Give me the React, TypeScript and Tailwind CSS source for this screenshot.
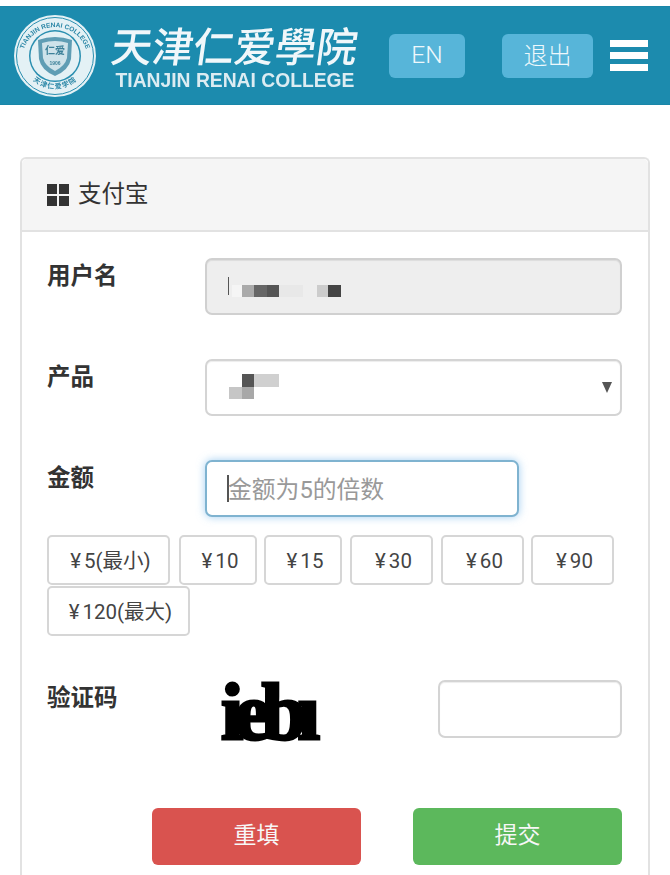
import React from 'react';

const cjk = 'font-["Roboto","Noto_Sans_CJK_SC",sans-serif]';

const amounts = [
    { value: '5(最小)', cls: 'w-[123px] mr-[9px]' },
    { value: '10', cls: 'w-[78px] mr-[7px]' },
    { value: '15', cls: 'w-[78px] mr-[8px]' },
    { value: '30', cls: 'w-[83px] mr-[8px]' },
    { value: '60', cls: 'w-[83px] mr-[7px]' },
    { value: '90', cls: 'w-[83px]' },
    { value: '120(最大)', cls: 'w-[143px]' },
];

const Seal: React.FC = () => (
    <svg width="84" height="84" viewBox="0 0 84 84" className="shrink-0">
        <circle cx="42" cy="42" r="41" fill="#e4f1f5" />
        <circle cx="42" cy="42" r="38.5" fill="none" stroke="#2a8fb0" strokeWidth="1" />
        <circle cx="42" cy="42" r="26" fill="#2a8fb0" />
        <circle cx="42" cy="42" r="24.5" fill="#e4f1f5" />
        <path d="M25 26 Q42 20 59 26 L58 45 Q56 56 42 62 Q28 56 26 45 Z" fill="#5f9db4" />
        <path d="M29 29 Q42 25 55 29 L54 44 Q52 52 42 57 Q32 52 30 44 Z" fill="#cfe3ea" />
        <defs>
            <path id="sealTop" d="M9 46 A33 33 0 0 1 75 46" />
            <path id="sealBottom" d="M13 58 A33.5 33.5 0 0 0 71 58" />
        </defs>
        <text fontSize="6.6" fontWeight="700" fill="#2a86a6" fontFamily="Liberation Sans">
            <textPath href="#sealTop" startOffset="50%" textAnchor="middle">TIANJIN RENAI COLLEGE</textPath>
        </text>
        <text fontSize="7" fontWeight="700" fill="#2a86a6" fontFamily="Noto Sans CJK SC" letterSpacing="1">
            <textPath href="#sealBottom" startOffset="50%" textAnchor="middle">天津仁爱学院</textPath>
        </text>
        <text x="42" y="40" textAnchor="middle" fontSize="10" fontWeight="700" fill="#3d8199" fontFamily="Noto Sans CJK SC">仁爱</text>
        <text x="42" y="51" textAnchor="middle" fontSize="5" fontWeight="700" fill="#3d8199" fontFamily="Liberation Sans">1906</text>
    </svg>
);

const Pixel: React.FC<{ w: number; color: string }> = ({ w, color }) => (
    <span className={color} style={{ width: w, height: '100%' }} />
);

export default function App() {
    return (
        <div className={`w-[670px] h-[875px] overflow-hidden bg-white text-[#333] ${cjk}`}>
            {/* Header */}
            <header className="mt-[6px] h-[99px] bg-[#1c8bae] flex items-center pl-[13px] border-y border-[#1a86a8]">
                <div className="flex items-center blur-[0.4px]">
                    <Seal />
                    <div className="ml-[14px] w-[248px] flex flex-col items-center text-[#f0f7fa]">
                        <div className='h-[50px] leading-[50px] text-[41px] font-["Noto_Sans_CJK_SC",sans-serif] font-medium whitespace-nowrap -skew-x-[8deg]'>
                            天津仁爱學院
                        </div>
                        <div className='mt-[1px] text-[19.3px] leading-[22px] font-bold font-["Liberation_Sans",sans-serif] whitespace-nowrap text-[#dcecf2]'>
                            TIANJIN RENAI COLLEGE
                        </div>
                    </div>
                </div>
                <button className="ml-[30px] w-[76px] h-[44px] rounded-[6px] bg-[#57b5d9] text-[#eef8fc] text-[24.5px] font-light">EN</button>
                <button className="ml-[37px] w-[91px] h-[44px] rounded-[6px] bg-[#57b5d9] text-[#eef8fc] text-[24px] font-light">退出</button>
                <div className="ml-[17px] w-[38px] flex flex-col gap-[5px]">
                    <span className="h-[7px] bg-white" />
                    <span className="h-[7px] bg-white" />
                    <span className="h-[7px] bg-white" />
                </div>
            </header>

            {/* Panel */}
            <main className="mt-[52px] mx-[20px] h-[800px] border-x-2 border-t-2 border-[#e2e2e2] rounded-t-[6px]">
                <div className="h-[73px] bg-[#f5f5f5] border-b-2 border-[#e2e2e2] rounded-t-[5px] pl-[25px] flex items-center">
                    <span className="grid grid-cols-2 gap-[2px] w-[22px] h-[22px]">
                        <i className="bg-[#333]" />
                        <i className="bg-[#333]" />
                        <i className="bg-[#333]" />
                        <i className="bg-[#333]" />
                    </span>
                    <span className="ml-[9px] text-[23.5px] leading-none">支付宝</span>
                </div>

                <div className="pt-[26px] pl-[25px] pr-[26px]">
                    {/* Username */}
                    <div className="flex">
                        <label className="w-[158px] pt-[2px] text-[23.5px] leading-[33px] font-bold">用户名</label>
                        <div className="flex-1 h-[57px] rounded-[7px] border-2 border-[#d0d0d0] bg-[#eeeeee] pl-[21px] flex items-center shadow-[inset_0_1px_1px_rgba(0,0,0,0.075)]">
                            <span className="w-[1px] h-[18px] bg-[#555] mt-[-2px]" />
                            <span className="flex h-[12px] ml-[3px] mt-[9px]">
                                <Pixel w={10} color="bg-[#f5f5f5]" />
                                <Pixel w={12} color="bg-[#aaaaaa]" />
                                <Pixel w={13} color="bg-[#666666]" />
                                <Pixel w={12} color="bg-[#555555]" />
                                <Pixel w={24} color="bg-[#e8e8e8]" />
                                <Pixel w={14} color="bg-[#eeeeee]" />
                                <Pixel w={11} color="bg-[#cccccc]" />
                                <Pixel w={13} color="bg-[#444444]" />
                            </span>
                        </div>
                    </div>

                    {/* Product */}
                    <div className="flex mt-[44px]">
                        <label className="w-[158px] pt-[2px] text-[23.5px] leading-[33px] font-bold">产品</label>
                        <div className="flex-1 h-[57px] rounded-[7px] border-2 border-[#d4d4d4] bg-white pl-[22px] pr-[8px] flex items-center justify-between shadow-[inset_0_1px_1px_rgba(0,0,0,0.075)]">
                            <span className="flex flex-col mt-[-2px]">
                                <span className="flex h-[13px]">
                                    <Pixel w={13} color="bg-white" />
                                    <Pixel w={12} color="bg-[#555555]" />
                                    <Pixel w={25} color="bg-[#d0d0d0]" />
                                </span>
                                <span className="flex h-[12px]">
                                    <Pixel w={13} color="bg-[#c6c6c6]" />
                                    <Pixel w={12} color="bg-[#a8a8a8]" />
                                </span>
                            </span>
                            <svg width="10" height="11" viewBox="0 0 10 11">
                                <polygon points="0,0 10,0 5,11" fill="#555" />
                            </svg>
                        </div>
                    </div>

                    {/* Amount */}
                    <div className="flex mt-[44px]">
                        <label className="w-[158px] pt-[2px] text-[23.5px] leading-[33px] font-bold">金额</label>
                        <div className="w-[314px] h-[57px] rounded-[7px] border-2 border-[#7fb3d0] bg-white pl-[20px] flex items-center shadow-[0_0_8px_rgba(102,175,233,0.6)]">
                            <span className="w-[2px] h-[27px] bg-[#555]" />
                            <span className="text-[23.8px] leading-[34px] pt-[3px] -ml-[1px] text-[#999]">金额为5的倍数</span>
                        </div>
                    </div>

                    <div className="mt-[18px] flex flex-wrap gap-y-[1px]">
                        {amounts.map((a) => (
                            <button
                                key={a.value}
                                className={`${a.cls} h-[50px] pt-[3px] pl-[4px] rounded-[5px] border-2 border-[#d6d6d6] bg-white text-[20.5px] text-[#444] whitespace-nowrap`}
                            >
                                <span className="mr-[3px]">¥</span>
                                {a.value}
                            </button>
                        ))}
                    </div>

                    {/* Captcha */}
                    <div className="flex mt-[44px]">
                        <label className="w-[158px] pt-[2px] text-[23.5px] leading-[33px] font-bold">验证码</label>
                        <span className='ml-[16px] mt-[-2px] h-[60px] text-[80px] leading-[68px] font-bold font-["Liberation_Serif",serif] text-black tracking-[-8.5px] [-webkit-text-stroke:3px_black] select-none'>
                            iebı
                        </span>
                        <input className="ml-auto w-[184px] h-[58px] rounded-[7px] border-2 border-[#d4d4d4] bg-white shadow-[inset_0_1px_1px_rgba(0,0,0,0.075)]" />
                    </div>

                    {/* Actions */}
                    <div className="mt-[70px] ml-[105px] flex justify-between">
                        <button className="w-[209px] h-[57px] rounded-[6px] bg-[#d9534f] text-[#f7f7f7] text-[23px]">重填</button>
                        <button className="w-[209px] h-[57px] rounded-[6px] bg-[#5cb85c] text-[#f7f7f7] text-[23px]">提交</button>
                    </div>
                </div>
            </main>
        </div>
    );
}
